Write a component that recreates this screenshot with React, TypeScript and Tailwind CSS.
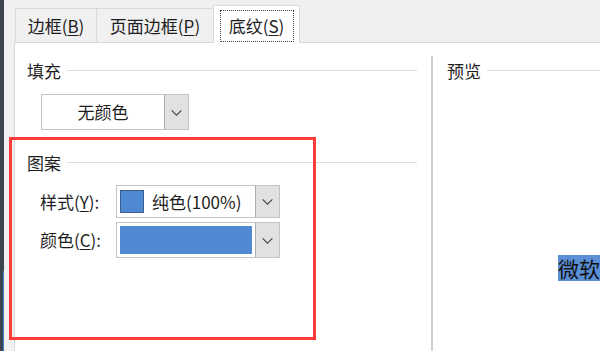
const font = { fontFamily: '"Noto Sans CJK SC", "Noto Sans", sans-serif' }

const Chevron = () => (
  <svg className="w-[13px] h-[13px]" viewBox="0 0 12 12" fill="none" stroke="#444" strokeWidth={1}>
    <path d="M1.5 4l4.5 4.5L10.5 4" />
  </svg>
)

const DropButton = () => (
  <div className="w-[24px] self-stretch flex items-center justify-center bg-[#e1e1e1] border-l border-[#adadad]">
    <Chevron />
  </div>
)

const SectionTitle = ({ children }: { children: string }) => (
  <div className="flex items-center gap-[6px]">
    <span className="text-[17px] leading-none text-[#1e1e1e]">{children}</span>
    <div className="flex-1 h-px bg-[#dcdcdc]" />
  </div>
)

export default function App() {
  return (
    <div className="relative w-[600px] h-[351px] overflow-hidden flex bg-[#f0f0f0]" style={font}>
      {/* window edge */}
      <div className="w-[4px] h-full bg-[#3b4550] flex flex-col justify-end">
        <div className="h-[80px] w-[1px] ml-[3px] bg-[#3d7cc9]" />
      </div>

      <div className="flex-1 flex flex-col pl-[10px]">
        {/* Tabs */}
        <div className="h-[42px] flex items-end ml-[1px] relative z-10">
          <div className="h-[34px] w-[81px] flex items-center justify-center bg-[#f0f0f0] border-l border-t border-[#d9d9d9] text-[17px] text-[#1e1e1e]">
            边框(<span className="underline underline-offset-2">B</span>)
          </div>
          <div className="h-[34px] w-[117px] flex items-center justify-center bg-[#f0f0f0] border-l border-t border-[#d9d9d9] text-[17px] text-[#1e1e1e]">
            页面边框(<span className="underline underline-offset-2">P</span>)
          </div>
          <div className="h-[38px] w-[87px] -mb-[1px] flex items-center justify-center bg-white border-l border-t border-r border-[#d9d9d9]">
            <div className="h-[32px] w-[74px] mt-[2px] flex items-center justify-center border border-dotted border-[#444] text-[17px] text-[#1e1e1e]">
              底纹(<span className="underline underline-offset-2">S</span>)
            </div>
          </div>
        </div>

        {/* Content */}
        <div className="flex-1 flex bg-white border-l border-t border-[#d9d9d9]">
          <div className="w-[416px] pl-[12px] pr-[14px] pt-[19px]">
            <SectionTitle>填充</SectionTitle>
            <div className="mt-[15px] ml-[14px] w-[148px] h-[36px] flex border border-[#c4c4c4] bg-white">
              <div className="flex-1 flex items-center justify-center text-[17px] text-[#1e1e1e]">无颜色</div>
              <DropButton />
            </div>

            <div className="mt-[24px]">
              <SectionTitle>图案</SectionTitle>
            </div>
            <div className="mt-[14px] ml-[13px] flex flex-col gap-[4px]">
              <div className="flex items-center">
                <span className="w-[76px] text-[17px] text-[#1e1e1e]">
                  样式(<span className="underline underline-offset-2">Y</span>):
                </span>
                <div className="w-[164px] h-[33px] flex border border-[#c4c4c4] bg-white">
                  <div className="flex-1 flex items-center pl-[3px]">
                    <div className="w-[24px] h-[23px] bg-[#4f89d1] border border-[#3c5f8e]" />
                    <span className="ml-[8px] text-[17px] text-[#1e1e1e]">纯色(100%)</span>
                  </div>
                  <DropButton />
                </div>
              </div>
              <div className="flex items-center">
                <span className="w-[76px] text-[17px] text-[#1e1e1e]">
                  颜色(<span className="underline underline-offset-2">C</span>):
                </span>
                <div className="w-[164px] h-[36px] flex border border-[#c4c4c4] bg-white">
                  <div className="flex-1 p-[3px]">
                    <div className="w-full h-full bg-[#4f89d1]" />
                  </div>
                  <DropButton />
                </div>
              </div>
            </div>
          </div>

          {/* Preview */}
          <div className="flex-1 flex flex-col pt-[13px]">
            <div className="flex-1 border-l-2 border-[#cfcfcf] pl-[14px] pt-[6px] flex flex-col">
              <SectionTitle>预览</SectionTitle>
              <div className="mt-[176px] pl-[111px] whitespace-nowrap">
                <span className="inline-block bg-[#5b8fd6] pr-[4px] text-[21px] leading-[26px] text-[#111]">微软</span>
              </div>
            </div>
          </div>
        </div>
      </div>

      {/* annotation */}
      <div className="absolute left-[9px] top-[137px] w-[307px] h-[203px] border-[3px] border-[#ff3a3a] pointer-events-none" />
    </div>
  )
}
